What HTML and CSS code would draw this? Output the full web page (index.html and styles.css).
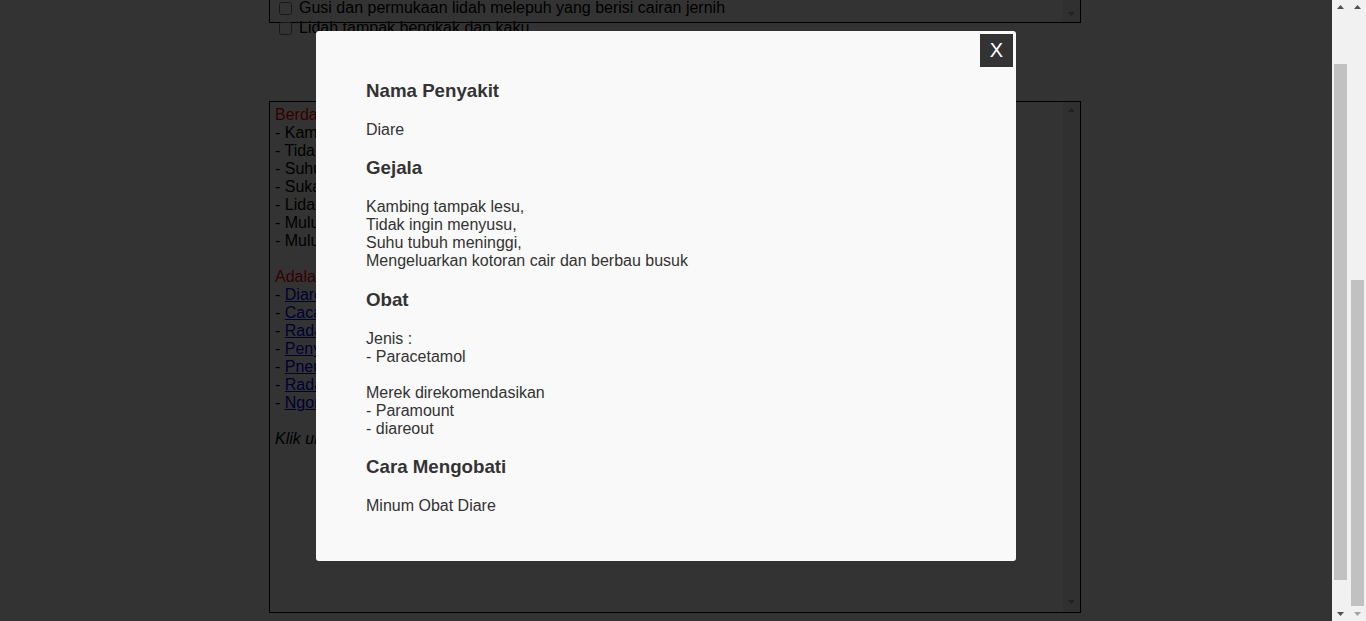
FILE: index.html
```html
<!DOCTYPE html>
<html lang="id">
<head>
<meta charset="utf-8">
<title>Sistem Pakar Penyakit Kambing</title>
<link rel="stylesheet" href="styles.css">
</head>
<body>
<div class="window">
  <div class="viewport">
    <div class="page">
      <div class="box symptoms">
        <div class="symptom-list">
          <div class="row"><input type="checkbox"><span>Mulut berbusa dan keluar air liur berlebihan</span></div>
          <div class="row"><input type="checkbox"><span>Kaki pincang dan kuku terasa panas</span></div>
          <div class="row"><input type="checkbox"><span>Gusi dan permukaan lidah melepuh yang berisi cairan jernih</span></div>
          <div class="row"><input type="checkbox"><span>Lidah tampak bengkak dan kaku</span></div>
        </div>
        <div class="mini-sb end">
          <svg class="arrow" width="7" height="4" viewBox="0 0 7 4"><polygon points="0,0 7,0 3.5,4" fill="#a3a3a3"/></svg>
        </div>
      </div>

      <div class="box result">
        <div class="result-text">
          <span class="red">Berdasarkan gejala yang anda pilih :</span><br>
          - Kambing tampak lesu<br>
          - Tidak ingin menyusu<br>
          - Suhu tubuh meninggi<br>
          - Suka menyendiri dari kelompok<br>
          - Lidah tampak bengkak<br>
          - Mulut berbusa<br>
          - Mulut terdapat luka<br>
          <br>
          <span class="red">Adalah kemungkinan penyakit :</span><br>
          - <a href="#">Diare</a><br>
          - <a href="#">Cacar Mulut</a><br>
          - <a href="#">Radang Paha</a><br>
          - <a href="#">Penyakit Mulut dan Kuku</a><br>
          - <a href="#">Pneumonia</a><br>
          - <a href="#">Radang Limpa</a><br>
          - <a href="#">Ngorok</a><br>
          <br>
          <em>Klik untuk melihat detail penyakit</em>
        </div>
        <div class="mini-sb split">
          <svg class="arrow" width="7" height="4" viewBox="0 0 7 4"><polygon points="3.5,0 7,4 0,4" fill="#a3a3a3"/></svg>
          <svg class="arrow" width="7" height="4" viewBox="0 0 7 4"><polygon points="0,0 7,0 3.5,4" fill="#a3a3a3"/></svg>
        </div>
      </div>
    </div>

    <div class="overlay">
      <div class="modal">
        <button class="close" type="button">X</button>
        <h3>Nama Penyakit</h3>
        <p>Diare</p>
        <h3>Gejala</h3>
        <p>Kambing tampak lesu,<br>Tidak ingin menyusu,<br>Suhu tubuh meninggi,<br>Mengeluarkan kotoran cair dan berbau busuk</p>
        <h3>Obat</h3>
        <p>Jenis :<br>- Paracetamol<br><br>Merek direkomendasikan<br>- Paramount<br>- diareout</p>
        <h3>Cara Mengobati</h3>
        <p>Minum Obat Diare</p>
      </div>
    </div>
  </div>

  <div class="sb">
    <div class="sb-btn top"><svg width="7" height="4" viewBox="0 0 7 4"><polygon points="3.5,0 7,4 0,4" fill="#505050"/></svg></div>
    <div class="sb-track"><div class="thumb thumb-inner"></div></div>
    <div class="sb-btn bottom"><svg width="7" height="4" viewBox="0 0 7 4"><polygon points="0,0 7,0 3.5,4" fill="#505050"/></svg></div>
  </div>
  <div class="sb">
    <div class="sb-btn top"><svg width="7" height="4" viewBox="0 0 7 4"><polygon points="3.5,0 7,4 0,4" fill="#505050"/></svg></div>
    <div class="sb-track"><div class="thumb thumb-outer"></div></div>
    <div class="sb-btn bottom"><svg width="7" height="4" viewBox="0 0 7 4"><polygon points="0,0 7,0 3.5,4" fill="#a3a3a3"/></svg></div>
  </div>
</div>
</body>
</html>
```

FILE: styles.css
```css
html, body {
  margin: 0;
  padding: 0;
  height: 100%;
  overflow: hidden;
  background: #ffffff;
}

body {
  font-family: "Liberation Sans", Arial, sans-serif;
  font-size: 16px;
  color: #000;
}

.window {
  display: flex;
  height: 621px;
  width: 1366px;
}

.viewport {
  position: relative;
  width: 1332px;
  flex: 0 0 1332px;
  overflow: hidden;
  background: #fff;
}

.page {
  margin-top: -43px;
  padding-left: 269px;
}

.box {
  width: 810px;
  border: 1px solid #000;
  display: flex;
  background: #fff;
}

.symptoms {
  height: 64px;
  overflow: visible;
}

.symptom-list {
  flex: 1;
}

.row {
  height: 20px;
  display: flex;
  align-items: center;
  white-space: nowrap;
}

.row input {
  width: 13px;
  height: 13px;
  margin: 0 7px 0 9px;
}

.mini-sb {
  width: 17px;
  flex: 0 0 17px;
  background: #f1f1f1;
  display: flex;
  flex-direction: column;
  align-items: center;
}

.mini-sb.end {
  justify-content: flex-end;
  padding-bottom: 6px;
  box-sizing: border-box;
}

.mini-sb.split {
  justify-content: space-between;
  padding: 6px 0 8px;
  box-sizing: border-box;
}

.result {
  margin-top: 78px;
  height: 510px;
}

.result-text {
  flex: 1;
  padding: 4px 5px;
  line-height: 18px;
}

.red {
  color: #ff0000;
}

.result-text a {
  color: #0000ee;
  text-decoration: underline;
}

.overlay {
  position: absolute;
  inset: 0;
  background: rgba(0, 0, 0, 0.8);
}

.modal {
  position: relative;
  width: 600px;
  margin: 31px auto 0;
  padding: 30.25px 50px 28px;
  background: #f9f9f9;
  border-radius: 3px;
  color: #333;
}

.modal h3 {
  font-size: 18.72px;
  font-weight: bold;
  line-height: 21px;
  margin: 18.5px 0 20px;
}

.modal p {
  margin: 18px 0;
  line-height: 18px;
}

.close {
  position: absolute;
  top: 3px;
  right: 3px;
  width: 33px;
  height: 33px;
  border: 0;
  padding: 0;
  background: #333;
  color: #fff;
  font-family: "Liberation Sans", Arial, sans-serif;
  font-size: 20px;
  line-height: 33px;
  text-align: center;
  cursor: pointer;
}

.sb {
  width: 17px;
  flex: 0 0 17px;
  background: #f1f1f1;
  display: flex;
  flex-direction: column;
}

.sb-btn {
  height: 15px;
  display: flex;
  justify-content: center;
}

.sb-btn.top {
  align-items: flex-end;
  padding-bottom: 6px;
  box-sizing: border-box;
}

.sb-btn.bottom {
  align-items: flex-start;
  padding-top: 6px;
  box-sizing: border-box;
}

.sb-btn svg {
  display: block;
}

.sb-track {
  flex: 1;
}

.thumb {
  background: #c1c1c1;
  margin-left: 2px;
  margin-right: 2px;
}

.thumb-inner {
  margin-top: 49px;
  height: 516px;
}

.thumb-outer {
  margin-top: 265px;
  height: 326px;
}
```
